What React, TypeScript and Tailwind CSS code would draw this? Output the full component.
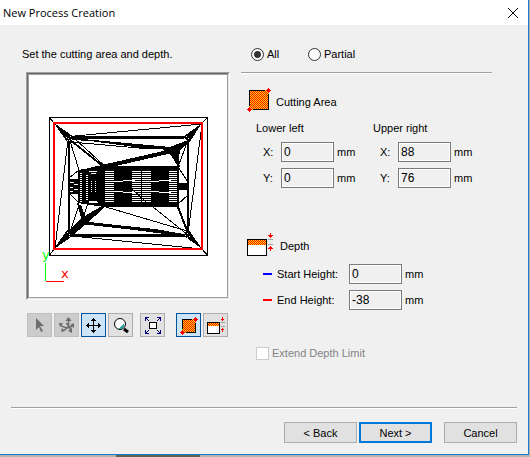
import { useState } from "react"
import type { ReactNode } from "react"

type Tone = "normal" | "active" | "disabled"

const toneClass: Record<Tone, string> = {
  normal: "border-[#adadad] bg-[#e1e1e1]",
  active: "border-[#005499] bg-[#cce4f7]",
  disabled: "border-[#bfbfbf] bg-[#cccccc]",
}

function ToolButton({
  label,
  tone = "normal",
  children,
}: {
  label: string
  tone?: Tone
  children: ReactNode
}) {
  return (
    <button
      aria-label={label}
      disabled={tone === "disabled"}
      className={`h-6 w-[25px] shrink-0 border ${toneClass[tone]}`}>
      <svg viewBox="1 1 23 22" className="block h-[22px] w-[23px]" shapeRendering="crispEdges">
        {children}
      </svg>
    </button>
  )
}

// Red and yellow checker used by the area and depth icons
function Dither({ id, flip = false }: { id: string; flip?: boolean }) {
  return (
    <defs>
      <pattern id={id} width="2" height="2" patternUnits="userSpaceOnUse">
        <rect width="2" height="2" fill={flip ? "#ffd800" : "#ff0000"} />
        <rect width="1" height="1" fill={flip ? "#ff0000" : "#ffd800"} />
        <rect x="1" y="1" width="1" height="1" fill={flip ? "#ff0000" : "#ffd800"} />
      </pattern>
    </defs>
  )
}

function AreaIcon() {
  return (
    <svg
      viewBox="247 88 24 28"
      className="h-7 w-6 shrink-0"
      shapeRendering="crispEdges"
      aria-hidden="true">
      <Dither id="area" flip />
      <path d="M249 90H266L269 93V110H252L249 107Z" fill="url(#area)" />
      <path
        d="M249.500 106V90.500H265M268.500 94V109.500H253"
        fill="none"
        stroke="#000"
      />
      <path d="M268 88h1v1h1v1h1v1h-1v1h-1v1h-1v-1h-1v-1h-1v-1h1v-1h1z" fill="#f00" />
      <path d="M249 107h1v1h1v1h1v1h-1v1h-1v1h-1v-1h-1v-1h-1v-1h1v-1h1z" fill="#f00" />
    </svg>
  )
}

function DepthIcon() {
  return (
    <svg
      viewBox="247 232 28 28"
      className="size-7 shrink-0"
      shapeRendering="crispEdges"
      aria-hidden="true">
      <Dither id="depth" flip />
      <rect x="247.500" y="239.500" width="19" height="16" fill="#fff" stroke="#000" />
      <rect x="248" y="240" width="18" height="5" fill="url(#depth)" />
      <path d="M268 239h5v1h-5zM268 244h5v1h-5z" fill="#a0a0a0" />
      <path
        d="M270 233h1v2h2v1h-1v1h-1v1h-1v-1h-1v-1h-1v-1h2zM270 251h1v-2h2v-1h-1v-1h-1v-1h-1v1h-1v1h-1v1h2z"
        fill="#f00"
      />
    </svg>
  )
}

const hatchRows = Array.from({ length: 16 }, (_, i) => 171 + i * 2)

function Preview() {
  return (
    <svg
      viewBox="29 75 198 222"
      className="block h-[222px] w-full bg-white"
      shapeRendering="crispEdges"
      role="img"
      aria-label="Model preview">
      <g fill="none" stroke="#000">
        <rect x="49.500" y="117.500" width="158" height="138" />
        <path d="M49 117L54 123M208 117L202 123M49 256L54 249M208 256L202 249" />
        {/* thin mesh edges */}
        <path d="M202 124L75 136M68 140L55 248M202 124L188 234M72 236L202 249" />
        <path d="M74 138L109 170M70 141L79 170M69 178L79 170M178 167L188 182M178 167L188 140M71 142L150 149" />
        <path d="M70 194L79 203M70 232L79 205M88 203L83 218M106 207L187 231M153 207L188 235M178 204L188 195M84 223L184 236" />
        <path
          d="M69 139L104 167M178 207L188 233M78 203L83 221M175 151L179 167"
          strokeWidth="2"
        />
      </g>
      {/* pocket frame */}
      <path d="M68 136H189V237H68ZM70 139V234H187V139Z" fillRule="evenodd" />
      {/* corner wedges */}
      <path d="M54 123L74 137L67 142ZM202 123L183 137L189 143ZM54 249L74 235L67 230ZM202 249L183 235L189 230Z" />
      <path
        d="M66 137h1v1h-1zM68 138h1v1h-1zM70 136h1v1h-1zM69 140h1v1h-1zM67 140h1v1h-1zM186 136h1v1h-1zM188 138h1v1h-1zM184 138h1v1h-1zM186 140h1v1h-1zM67 232h1v1h-1zM69 234h1v1h-1zM71 233h1v1h-1zM69 236h1v1h-1zM187 233h1v1h-1zM185 235h1v1h-1zM189 236h1v1h-1zM187 237h1v1h-1z"
        fill="#fff"
      />
      {/* ribs */}
      <path d="M72 138L170 147L176 150L150 149L90 141L72 140Z" />
      <path d="M188 140L170 147L162 149L171 155L178 167L180 150L187 144Z" />
      <path d="M80 170L172 149V153L116 166L104 168V166Z" />
      <path d="M102 206L83 217L68 231L72 236L85 225L104 208Z" />
      <path d="M78 205L83 221L86 219L81 205Z" />
      <path d="M80 221L126 226L155 229L184 234V236L150 231L126 229L80 224Z" />

      {/* body */}
      <path d="M78 170L104 166H179V207H104L78 203Z" />
      <path d="M69 179h9v15h-9zM178 183h10v7h-10z" />
      <g fill="#fff">
        <path d="M70 182h4v1h-4zM74 184h4v1h-4zM70 187h3v1h-3zM74 189h4v1h-4zM70 191h3v1h-3z" />
        <path d="M89 171h8v1h-8zM91 173h5v1h-5zM89 201h8v1h-8zM89 202h9v1h-9z" />
        <path d="M114 181h9v1h-9zM123 180h12v1h-12zM114 191h9v1h-9zM123 192h12v1h-12zM151 181h8v1h-8zM159 180h12v1h-12zM151 191h8v1h-8zM159 192h12v1h-12z" />
        {hatchRows.map((y, i) => (
          <g key={y}>
            <rect x="105" y={y} width="9" height="1" />
            <rect x="132" y={y} width="9" height="1" />
            <rect x="142" y={y} width="9" height="1" />
            <rect x="169" y={y} width="8" height="1" />
            {i > 0 && <rect x="80" y={y} width="2" height="1" />}
            {i > 1 && i < 15 && <rect x="86" y={y} width="2" height="1" />}
            {i > 4 && i < 11 && <rect x="91" y={y} width="1" height="1" />}
            {i > 4 && i < 11 && <rect x="95" y={y} width="1" height="1" />}
          </g>
        ))}
      </g>
      <path d="M132 189L147 203" stroke="#000" />

      {/* cutting area */}
      <rect x="54" y="123" width="148" height="126" fill="none" stroke="#f00" strokeWidth="2" />

      {/* axes */}
      <path d="M45 263h1v18h-1z" fill="#0f0" />
      <path d="M46 281h18v1h-18z" fill="#f00" />
      <text x="42" y="259" fill="#0f0" className="font-['DejaVu_Sans'] text-[13px]">
        y
      </text>
      <text x="61" y="278" fill="#f00" className="font-['DejaVu_Sans'] text-[13px]">
        x
      </text>
    </svg>
  )
}

function ValueField({
  id,
  label,
  value,
  labelClass,
}: {
  id: string
  label: ReactNode
  value: string
  labelClass: string
}) {
  return (
    <div className="flex h-5 items-center">
      <label htmlFor={id} className={labelClass}>
        {label}
      </label>
      <input
        id={id}
        readOnly
        defaultValue={value}
        className="h-5 w-[53px] border border-[#7a7a7a] bg-[#f0f0f0] px-[2px] text-[12px] inset-ring inset-ring-white outline-none"
      />
      <span className="ml-[3px]">mm</span>
    </div>
  )
}

function Rule() {
  return <div className="h-[2px] border-t border-b border-t-[#a0a0a0] border-b-white" />
}

const radioClass =
  "size-[13px] appearance-none rounded-full border border-[#333] bg-white checked:bg-[radial-gradient(circle,#333_3px,#fff_4px)]"

export default function App() {
  const [mode, setMode] = useState("all")

  return (
    <div className="flex min-h-screen flex-col bg-[#b4b4b4] pr-px font-['Liberation_Sans',Arial,sans-serif] text-[11px] leading-5 text-black">
      <div className="flex flex-1 flex-col border-r border-b border-[#1979ca] bg-[#f0f0f0]">
        <header className="flex h-[25px] items-center justify-between bg-white pr-[10px] pl-[3px]">
          <h1 className="font-['Open_Sans','Noto_Sans',sans-serif] text-[11px]">
            New Process Creation
          </h1>
          <button aria-label="Close">
            <svg viewBox="0 0 10 10" className="block size-[10px]" stroke="#000">
              <path d="M0 0L10 10M10 0L0 10" />
            </svg>
          </button>
        </header>

        <main className="flex flex-1 gap-[11px] pt-[19px] pr-9 pl-[26px]">
          <section className="-ml-1 w-[208px] shrink-0">
            <p>Set the cutting area and depth.</p>
            <div className="mt-2 ml-1 border border-t-[#a0a0a0] border-r-white border-b-white border-l-[#a0a0a0]">
              <div className="border border-t-[#696969] border-r-[#e3e3e3] border-b-[#e3e3e3] border-l-[#696969]">
                <div className="border border-[#a0a0a0]">
                  <Preview />
                </div>
              </div>
            </div>

            <div className="mt-[13px] ml-[5px] flex gap-[2px]">
              <ToolButton label="Select" tone="disabled">
                <path
                  d="M9 5L17 13H13L16 18L14 19L12 14L9 17Z"
                  fill="#6d6d6d"
                  shapeRendering="auto"
                />
              </ToolButton>
              <ToolButton label="Rotate" tone="disabled">
                <g stroke="#6d6d6d" fill="none" strokeWidth="1.500" shapeRendering="auto">
                  <path d="M14.500 6V14L9 18M6 11C8 15 16 16 19 12M12.500 10L17 17" />
                </g>
                <path
                  d="M14.500 4L17.500 8H11.500ZM5 10L9 10L6 14ZM20 10V15L16 12ZM7 19L8 15L11 18ZM18 20L14 18L18 15Z"
                  fill="#6d6d6d"
                  shapeRendering="auto"
                />
              </ToolButton>
              <ToolButton label="Pan" tone="active">
                <path d="M12 6h1v13h-1zM6 12h13v1h-13z" />
                <path d="M12 5h1v1h1v1h1v1h-5v-1h1v-1h1zM12 20h1v-1h1v-1h1v-1h-5v1h1v1h1zM5 12v1h1v1h1v1h1v-5h-1v1h-1v1zM20 12v1h-1v1h-1v1h-1v-5h1v1h1v1z" />
              </ToolButton>
              <ToolButton label="Zoom">
                <circle cx="12" cy="11" r="5.500" fill="#fff" stroke="#000" shapeRendering="auto" />
                <path d="M16 10v3l-3 3h-3l3-2z" fill="#20a8a8" />
                <path d="M16 16L20 19" stroke="#000" strokeWidth="3" shapeRendering="auto" />
              </ToolButton>
              <div className="w-[3px]" />
              <ToolButton label="Fit to window">
                <rect x="9.500" y="9.500" width="7" height="6" fill="#fff" stroke="#000" />
                <path
                  d="M5.500 8V4.500H9M5 4L9 8M17 4.500H20.500V8M21 4L17 8M5.500 17V20.500H9M5 21L9 17M17 20.500H20.500V17M21 21L17 17"
                  fill="none"
                  stroke="#000080"
                />
              </ToolButton>
              <div className="w-[7px]" />
              <ToolButton label="Cutting area" tone="active">
                <Dither id="toolArea" />
                <path d="M6 6H17L20 9V20H9L6 17Z" fill="url(#toolArea)" />
                <path d="M6.500 16V6.500H16M19.500 10V19.500H10" fill="none" stroke="#000" />
                <path
                  d="M19 4h1v1h1v1h1v1h-1v1h-1v1h-1v-1h-1v-1h-1v-1h1v-1h1zM6 17h1v1h1v1h1v1h-1v1h-1v1h-1v-1h-1v-1h-1v-1h1v-1h1z"
                  fill="#f00"
                />
              </ToolButton>
              <ToolButton label="Depth">
                <Dither id="toolDepth" flip />
                <rect x="4.500" y="9.500" width="12" height="11" fill="#fff" stroke="#000" />
                <rect x="5" y="10" width="11" height="3" fill="url(#toolDepth)" />
                <path d="M18 9h4v1h-4zM18 13h4v1h-4z" fill="#a0a0a0" />
                <path
                  d="M19 4h1v2h1v1h-1v1h-1v-1h-1v-1h1zM19 19h1v-2h1v-1h-1v-1h-1v1h-1v1h1z"
                  fill="#f00"
                />
              </ToolButton>
            </div>
          </section>

          <section className="flex-1">
            <div className="flex h-5 items-center pl-[10px]">
              <label className="flex w-[57px] items-center gap-[3px]">
                <input
                  type="radio"
                  name="mode"
                  checked={mode === "all"}
                  onChange={() => setMode("all")}
                  className={radioClass}
                />
                All
              </label>
              <label className="flex items-center gap-[3px]">
                <input
                  type="radio"
                  name="mode"
                  checked={mode === "partial"}
                  onChange={() => setMode("partial")}
                  className={radioClass}
                />
                Partial
              </label>
            </div>
            <div className="mt-2">
              <Rule />
            </div>

            <h2 className="mt-[14px] flex items-center gap-[5px] pl-[6px]">
              <AreaIcon />
              Cutting Area
            </h2>
            <div className="mt-[2px] flex pl-[15px]">
              <div className="w-[117px]">
                <h3>Lower left</h3>
                <div className="mt-1 flex flex-col gap-[6px] pl-[7px]">
                  <ValueField id="left-x" label="X:" value="0" labelClass="w-[18px]" />
                  <ValueField id="left-y" label="Y:" value="0" labelClass="w-[18px]" />
                </div>
              </div>
              <div>
                <h3>Upper right</h3>
                <div className="mt-1 flex flex-col gap-[6px] pl-[7px]">
                  <ValueField id="right-x" label="X:" value="88" labelClass="w-[18px]" />
                  <ValueField id="right-y" label="Y:" value="76" labelClass="w-[18px]" />
                </div>
              </div>
            </div>

            <h2 className="mt-11 flex items-center gap-[5px] pl-[6px]">
              <DepthIcon />
              Depth
            </h2>
            <div className="mt-1 flex flex-col gap-[6px] pl-[22px]">
              <ValueField
                id="start"
                value="0"
                labelClass="flex w-[86px] items-center gap-[5px]"
                label={
                  <>
                    <span className="h-[2px] w-[9px] bg-[#0000ff]" />
                    Start Height:
                  </>
                }
              />
              <ValueField
                id="end"
                value="-38"
                labelClass="flex w-[86px] items-center gap-[5px]"
                label={
                  <>
                    <span className="h-[2px] w-[9px] bg-[#ff0000]" />
                    End Height:
                  </>
                }
              />
            </div>

            <label className="mt-[33px] flex items-center gap-[3px] pl-[15px] text-[#838383]">
              <input
                type="checkbox"
                disabled
                className="size-[13px] appearance-none border border-[#cccccc] bg-white"
              />
              Extend Depth Limit
            </label>
          </section>
        </main>

        <footer className="px-[11px] pb-[11px]">
          <Rule />
          <div className="mt-[13px] flex justify-end gap-[2px] leading-4">
            <button className="h-[21px] w-[73px] border border-[#adadad] bg-[#e1e1e1]">
              &lt; Back
            </button>
            <button className="h-[21px] w-[73px] border-2 border-[#0078d7] bg-[#e1e1e1]">
              Next &gt;
            </button>
            <button className="ml-[10px] h-[21px] w-[73px] border border-[#adadad] bg-[#e1e1e1]">
              Cancel
            </button>
          </div>
        </footer>
      </div>
      <div className="h-[2px] pl-[116px]">
        <div className="h-[2px] w-[84px] bg-[#5c6450]" />
      </div>
    </div>
  )
}
